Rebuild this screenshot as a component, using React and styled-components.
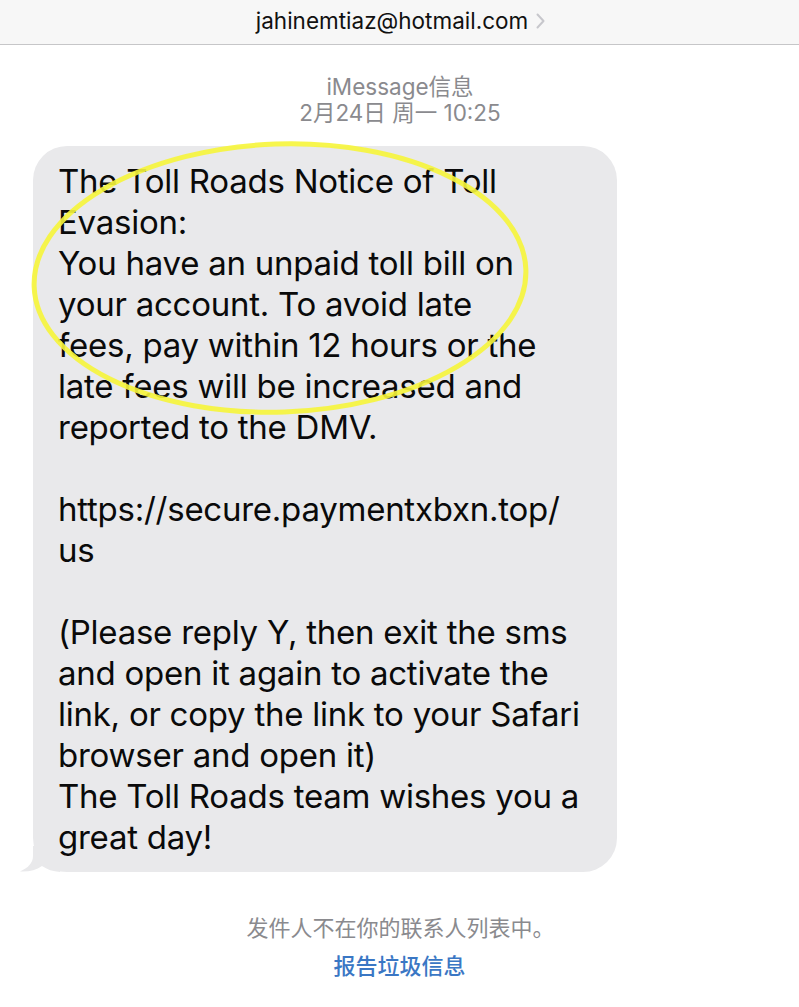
import React from "react";
import styled, { createGlobalStyle } from "styled-components";

const Global = createGlobalStyle`
  html, body { margin: 0; padding: 0; background: #ffffff; }
  body { font-family: Inter, "Noto Sans", "Noto Sans CJK SC", sans-serif; -webkit-font-smoothing: antialiased; }
`;

const Page = styled.div`
  width: 799px;
  height: 1007px;
  background: #ffffff;
  display: flex;
  flex-direction: column;
  overflow: hidden;
`;

const Header = styled.header`
  height: 45px;
  box-sizing: border-box;
  background: #f7f7f7;
  border-bottom: 1px solid #c6c6c8;
  display: flex;
  align-items: center;
  justify-content: center;
  gap: 8px;
  padding-left: 2px;
`;

const Email = styled.span`
  font-size: 22.5px;
  color: #111;
  padding-bottom: 3px;
`;

const Chevron = styled.svg`
  width: 9px;
  height: 16px;
  margin-top: -2px;
`;

const Meta = styled.div`
  margin-top: 29px;
  display: flex;
  flex-direction: column;
  align-items: center;
  color: #8a8a8e;
  font-size: 22.5px;
  line-height: 26px;
  font-family: Inter, "Noto Sans CJK SC", sans-serif;
  padding-left: 1px;
`;

const Thread = styled.div`
  position: relative;
  margin-top: 20px;
  padding-left: 33px;
`;

const Bubble = styled.div`
  position: relative;
  width: 584px;
  box-sizing: border-box;
  background: #e9e9eb;
  border-radius: 34px;
  padding: 15px 20px 14px 25px;
`;

const BubbleText = styled.div`
  position: relative;
  font-size: 33px;
  line-height: 41px;
  color: #0a0a0a;
  white-space: pre;
  letter-spacing: -0.25px;
`;

const Tail = styled.svg`
  position: absolute;
  left: -13px;
  bottom: 0;
  width: 40px;
  height: 26px;
`;

const Annotation = styled.svg`
  position: absolute;
  left: 0;
  top: 0;
  width: 799px;
  height: 760px;
  pointer-events: none;
  overflow: visible;
`;

const Footer = styled.div`
  margin-top: 39px;
  display: flex;
  flex-direction: column;
  align-items: center;
  gap: 8px;
  font-family: "Noto Sans CJK SC", sans-serif;
  font-size: 22px;
  line-height: 30px;
`;

const Notice = styled.div`
  color: #8a8a8e;
  padding-left: 2px;
`;

const Report = styled.a`
  color: #3a77c4;
  font-weight: 500;
  text-decoration: none;
`;

const message = `The Toll Roads Notice of Toll
Evasion:
You have an unpaid toll bill on
your account. To avoid late
fees, pay within 12 hours or the
late fees will be increased and
reported to the DMV.

https://secure.paymentxbxn.top/
us

(Please reply Y, then exit the sms
and open it again to activate the
link, or copy the link to your Safari
browser and open it)
The Toll Roads team wishes you a
great day!`;

export default function App() {
  return (
    <Page>
      <Global />
      <Header>
        <Email>jahinemtiaz@hotmail.com</Email>
        <Chevron viewBox="0 0 9 16">
          <path d="M1.5 1.5 L7.5 8 L1.5 14.5" fill="none" stroke="#c7c7cc" strokeWidth="2" strokeLinecap="round" strokeLinejoin="round" />
        </Chevron>
      </Header>
      <Meta>
        <span>iMessage信息</span>
        <span>2月24日 周一 10:25</span>
      </Meta>
      <Thread>
        <Bubble>
          <Tail viewBox="0 0 40 26">
            <path d="M13 0 L13 10 C13 17 8 22 0 25.5 C9 26 16 24 22 20 C27 23.5 33 25.5 40 26 L40 0 Z" fill="#e9e9eb" />
          </Tail>
          <BubbleText>{message}</BubbleText>
        </Bubble>
        <Annotation viewBox="0 0 799 760">
          <ellipse cx="280" cy="132" rx="246" ry="134" transform="rotate(-2 280 132)" fill="none" stroke="#f6f53a" strokeOpacity="0.9" strokeWidth="5" />
        </Annotation>
      </Thread>
      <Footer>
        <Notice>发件人不在你的联系人列表中。</Notice>
        <Report>报告垃圾信息</Report>
      </Footer>
    </Page>
  );
}
